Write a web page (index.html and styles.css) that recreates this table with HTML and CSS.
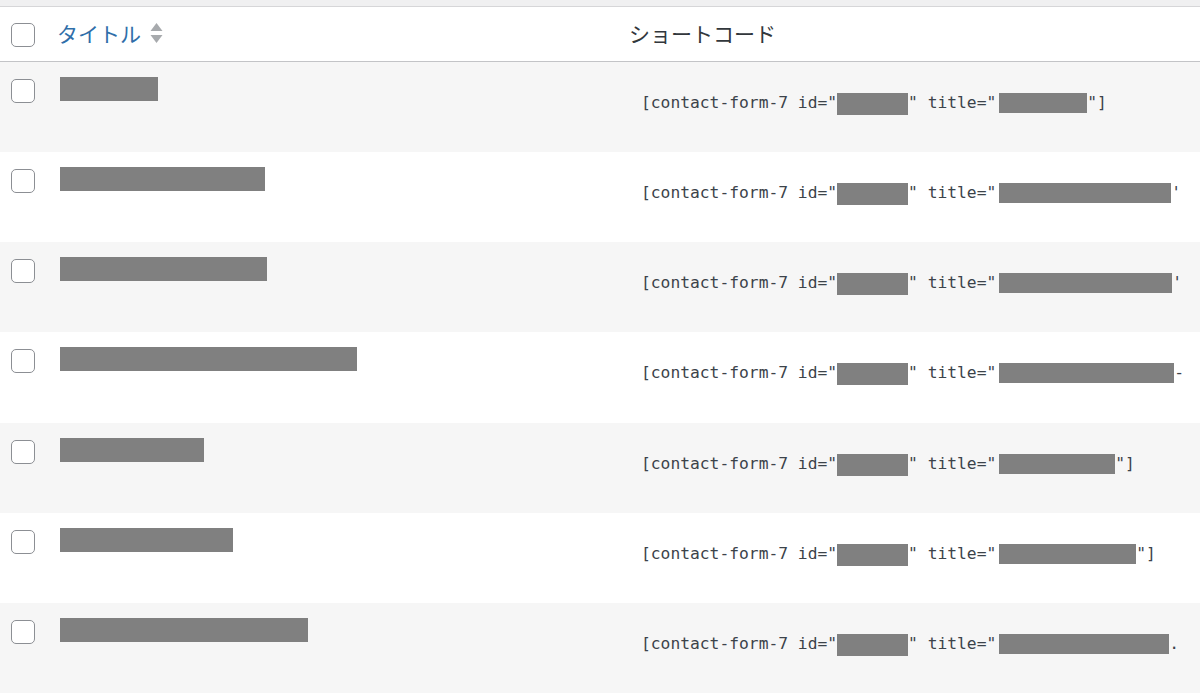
FILE: index.html
```html
<!DOCTYPE html>
<html lang="ja">
<head>
<meta charset="utf-8">
<title>コンタクトフォーム</title>
<link rel="stylesheet" href="styles.css">
</head>
<body>
<div class="top-strip"></div>
<div class="list">
  <div class="row head">
    <div class="cell check"><span class="box"></span></div>
    <div class="cell title-col">
      <a class="sort-link" href="#">タイトル
        <svg class="sort" width="13" height="22" viewBox="0 0 13 22"><path d="M6.5 1 L12.5 9 L0.5 9 Z" fill="#a7aaad"/><path d="M0.5 13 L12.5 13 L6.5 21 Z" fill="#a7aaad"/></svg>
      </a>
    </div>
    <div class="cell code-col">ショートコード</div>
  </div>

  <div class="row">
    <div class="cell check"><span class="box"></span></div>
    <div class="cell title-col"><span class="redact title-r" style="width:98px"></span></div>
    <div class="cell code-col"><code class="sc">[contact-form-7 id="<span class="redact id-r"></span>" title="<span class="redact tt-r" style="width:88px"></span>"]</code></div>
  </div>
  <div class="row">
    <div class="cell check"><span class="box"></span></div>
    <div class="cell title-col"><span class="redact title-r" style="width:205px"></span></div>
    <div class="cell code-col"><code class="sc">[contact-form-7 id="<span class="redact id-r"></span>" title="<span class="redact tt-r" style="width:172px"></span>'</code></div>
  </div>
  <div class="row">
    <div class="cell check"><span class="box"></span></div>
    <div class="cell title-col"><span class="redact title-r" style="width:207px"></span></div>
    <div class="cell code-col"><code class="sc">[contact-form-7 id="<span class="redact id-r"></span>" title="<span class="redact tt-r" style="width:173px"></span>'</code></div>
  </div>
  <div class="row">
    <div class="cell check"><span class="box"></span></div>
    <div class="cell title-col"><span class="redact title-r" style="width:297px"></span></div>
    <div class="cell code-col"><code class="sc">[contact-form-7 id="<span class="redact id-r"></span>" title="<span class="redact tt-r" style="width:175px"></span>-</code></div>
  </div>
  <div class="row">
    <div class="cell check"><span class="box"></span></div>
    <div class="cell title-col"><span class="redact title-r" style="width:144px"></span></div>
    <div class="cell code-col"><code class="sc">[contact-form-7 id="<span class="redact id-r"></span>" title="<span class="redact tt-r" style="width:116px"></span>"]</code></div>
  </div>
  <div class="row">
    <div class="cell check"><span class="box"></span></div>
    <div class="cell title-col"><span class="redact title-r" style="width:173px"></span></div>
    <div class="cell code-col"><code class="sc">[contact-form-7 id="<span class="redact id-r"></span>" title="<span class="redact tt-r" style="width:137px"></span>"]</code></div>
  </div>
  <div class="row">
    <div class="cell check"><span class="box"></span></div>
    <div class="cell title-col"><span class="redact title-r" style="width:248px"></span></div>
    <div class="cell code-col"><code class="sc">[contact-form-7 id="<span class="redact id-r"></span>" title="<span class="redact tt-r" style="width:170px"></span>.</code></div>
  </div>
</div>
</body>
</html>
```

FILE: styles.css
```css
html, body {
  margin: 0;
  padding: 0;
  background: #ffffff;
}
body {
  width: 1200px;
  height: 695px;
  overflow: hidden;
  font-family: "Noto Sans CJK JP", "Noto Sans", sans-serif;
  color: #2c3338;
}
.top-strip {
  height: 6px;
  background: #f0f0f1;
  border-bottom: 1px solid #d6d6d8;
}
.list {
  display: flex;
  flex-direction: column;
}
.row {
  display: grid;
  grid-template-columns: 57px 572px 1fr;
  height: 90.15px;
  background: #ffffff;
  overflow: hidden;
}
.row:nth-child(even) {
  background: #f6f6f6;
}
.row.head {
  height: 54px;
  border-bottom: 1px solid #c3c4c7;
  background: #ffffff;
}
.cell {
  min-width: 0;
  white-space: nowrap;
  overflow: hidden;
}
.check {
  padding: 17px 0 0 11px;
}
.head .check {
  padding-top: 16px;
}
.box {
  display: block;
  width: 24px;
  height: 24px;
  box-sizing: border-box;
  border: 1.5px solid #8c8f94;
  border-radius: 5px;
  background: #ffffff;
}
.head .title-col,
.head .code-col {
  display: flex;
  align-items: center;
  font-size: 21px;
  padding: 0 0 2px 0;
}
.sort-link {
  display: flex;
  align-items: center;
  color: #2f6ea9;
  text-decoration: none;
  letter-spacing: 0;
}
.sort {
  margin-left: 9px;
}
.head .code-col {
  color: #32373c;
}
.title-col {
  padding: 15px 0 0 3px;
}
.redact {
  display: inline-block;
  background: #808080;
}
.title-r {
  height: 24px;
}
.code-col {
  padding: 27px 0 0 12px;
}
.sc {
  font-family: "DejaVu Sans Mono", "Liberation Mono", monospace;
  font-size: 16.3px;
  line-height: 24px;
  color: #3c434a;
}
.id-r {
  width: 71px;
  height: 22px;
  vertical-align: -7px;
}
.tt-r {
  height: 20px;
  margin-left: 3px;
  vertical-align: -5px;
}
```
